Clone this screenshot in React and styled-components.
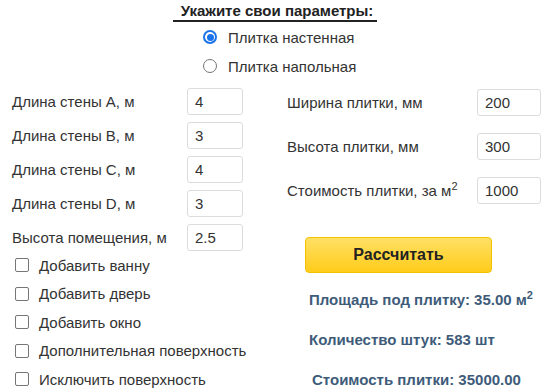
import React, { useState } from 'react';
import styled, { createGlobalStyle } from 'styled-components';

const GlobalStyle = createGlobalStyle`
    body {
        margin: 0;
        background: #ffffff;
        font-family: 'Liberation Sans', Arial, sans-serif;
        color: #333333;
    }
`;

const Page = styled.div`
    width: 550px;
    height: 391px;
    overflow: hidden;
    padding-top: 2px;
    box-sizing: border-box;
`;

const Title = styled.div`
    width: 204px;
    margin: 0 auto;
    padding-left: 4px;
    box-sizing: border-box;
    text-align: center;
    font-size: 15px;
    font-weight: 700;
    line-height: 18px;
    color: #222222;
    border-bottom: 2px solid #222222;
`;

const RadioGroup = styled.div`
    display: flex;
    flex-direction: column;
    align-items: flex-start;
    margin: 4px 0 0 203px;
    gap: 7px;
`;

const RadioRow = styled.label`
    display: flex;
    align-items: center;
    gap: 11px;
    height: 22px;
    font-size: 15px;
    color: #333333;
`;

const Radio = styled.span`
    width: 14px;
    height: 14px;
    border-radius: 50%;
    box-sizing: border-box;
    border: ${p => p.$checked ? '2px solid #1a73e8' : '1px solid #767676'};
    display: flex;
    align-items: center;
    justify-content: center;
    &::after {
        content: '';
        width: 7px;
        height: 7px;
        border-radius: 50%;
        background: ${p => p.$checked ? '#1a73e8' : 'transparent'};
    }
`;

const Columns = styled.div`
    display: grid;
    grid-template-columns: 287px 263px;
    margin-top: 3px;
`;

const LeftColumn = styled.div`
    padding: 4px 0 0 12px;
    display: flex;
    flex-direction: column;
`;

const RightColumn = styled.div`
    display: flex;
    flex-direction: column;
`;

const FieldRow = styled.div`
    display: flex;
    align-items: center;
    height: ${p => p.$h}px;
`;

const FieldLabel = styled.span`
    width: ${p => p.$w}px;
    font-size: 15px;
    color: #333333;
    sup {
        font-size: 11px;
        line-height: 0;
        vertical-align: 6px;
    }
`;

const Input = styled.input`
    width: ${p => p.$w}px;
    height: 27px;
    box-sizing: border-box;
    border: 1px solid #dcdcdc;
    border-radius: 3px;
    padding: 0 7px;
    font-family: 'Liberation Sans', Arial, sans-serif;
    font-size: 15px;
    color: #333333;
    outline: none;
`;

const Checks = styled.div`
    display: flex;
    flex-direction: column;
    margin-top: -3px;
    padding-left: 3px;
`;

const CheckRow = styled.label`
    display: flex;
    align-items: center;
    gap: 10px;
    height: 28.5px;
    font-size: 15px;
    color: #333333;
`;

const Box = styled.span`
    width: 14px;
    height: 14px;
    border: 1px solid #767676;
    border-radius: 2px;
    box-sizing: border-box;
`;

const CalcButton = styled.button`
    margin: 25px 0 0 18px;
    width: 187px;
    height: 36px;
    border: 1px solid #f2c200;
    border-radius: 4px;
    background: linear-gradient(#ffe065, #ffcc1a);
    font-family: 'Liberation Sans', Arial, sans-serif;
    font-size: 16px;
    font-weight: 700;
    color: #222222;
    cursor: pointer;
`;

const Results = styled.div`
    display: flex;
    flex-direction: column;
    margin: 7px 0 0 22px;
`;

const Result = styled.div`
    height: 40px;
    line-height: 40px;
    font-size: 15px;
    font-weight: 700;
    color: #3e5c7a;
    padding-left: ${p => p.$shift || 0}px;
    sup {
        font-size: 11px;
        line-height: 0;
        vertical-align: 6px;
    }
`;

const wallFields = [
    ['Длина стены A, м', '4'],
    ['Длина стены B, м', '3'],
    ['Длина стены C, м', '4'],
    ['Длина стены D, м', '3'],
    ['Высота помещения, м', '2.5'],
];

const extras = [
    'Добавить ванну',
    'Добавить дверь',
    'Добавить окно',
    'Дополнительная поверхность',
    'Исключить поверхность',
];

const App = () => {
    const [wall, setWall] = useState(true);
    return (
        <Page>
            <GlobalStyle />
            <Title>Укажите свои параметры:</Title>
            <RadioGroup>
                <RadioRow onClick={() => setWall(true)}>
                    <Radio $checked={wall} />
                    Плитка настенная
                </RadioRow>
                <RadioRow onClick={() => setWall(false)}>
                    <Radio $checked={!wall} />
                    Плитка напольная
                </RadioRow>
            </RadioGroup>
            <Columns>
                <LeftColumn>
                    {wallFields.map(([label, value]) => (
                        <FieldRow key={label} $h={34}>
                            <FieldLabel $w={175}>{label}</FieldLabel>
                            <Input $w={56} defaultValue={value} />
                        </FieldRow>
                    ))}
                    <Checks>
                        {extras.map(item => (
                            <CheckRow key={item}>
                                <Box />
                                {item}
                            </CheckRow>
                        ))}
                    </Checks>
                </LeftColumn>
                <RightColumn>
                    <FieldRow $h={44}>
                        <FieldLabel $w={190}>Ширина плитки, мм</FieldLabel>
                        <Input $w={64} defaultValue="200" />
                    </FieldRow>
                    <FieldRow $h={44}>
                        <FieldLabel $w={190}>Высота плитки, мм</FieldLabel>
                        <Input $w={64} defaultValue="300" />
                    </FieldRow>
                    <FieldRow $h={44}>
                        <FieldLabel $w={190}>Стоимость плитки, за м<sup>2</sup></FieldLabel>
                        <Input $w={64} defaultValue="1000" />
                    </FieldRow>
                    <div>
                        <CalcButton>Рассчитать</CalcButton>
                    </div>
                    <Results>
                        <Result>Площадь под плитку: 35.00 м<sup>2</sup></Result>
                        <Result>Количество штук: 583 шт</Result>
                        <Result $shift={3}>Стоимость плитки: 35000.00</Result>
                    </Results>
                </RightColumn>
            </Columns>
        </Page>
    );
};

export default App;
